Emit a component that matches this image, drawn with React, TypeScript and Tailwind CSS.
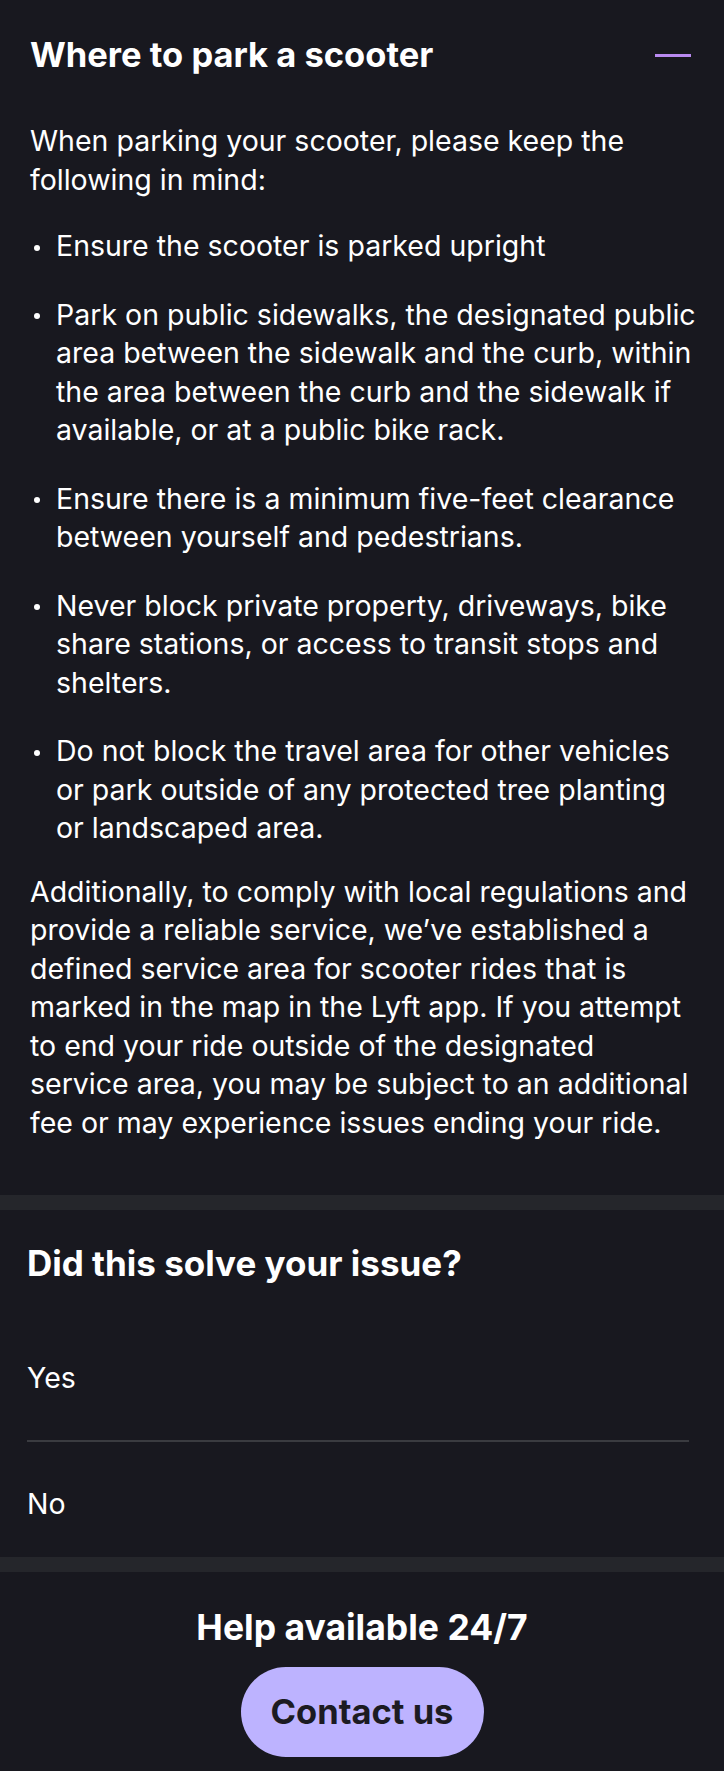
import React from 'react';

// line breaks follow the reference layout
const intro = ['When parking your scooter, please keep the', 'following in mind:'];

const bullets = [
  ['Ensure the scooter is parked upright'],
  [
    'Park on public sidewalks, the designated public',
    'area between the sidewalk and the curb, within',
    'the area between the curb and the sidewalk if',
    'available, or at a public bike rack.',
  ],
  ['Ensure there is a minimum five-feet clearance', 'between yourself and pedestrians.'],
  ['Never block private property, driveways, bike', 'share stations, or access to transit stops and', 'shelters.'],
  ['Do not block the travel area for other vehicles', 'or park outside of any protected tree planting', 'or landscaped area.'],
];

const additional = [
  'Additionally, to comply with local regulations and',
  'provide a reliable service, we’ve established a',
  'defined service area for scooter rides that is',
  'marked in the map in the Lyft app. If you attempt',
  'to end your ride outside of the designated',
  'service area, you may be subject to an additional',
  'fee or may experience issues ending your ride.',
];

const Lines: React.FC<{ lines: string[] }> = ({ lines }) => (
  <>
    {lines.map((l, i) => (
      <span key={i} className="block whitespace-nowrap">
        {l}
      </span>
    ))}
  </>
);

const App: React.FC = () => {
  return (
    <div className="min-h-screen w-full bg-[#18181f] text-white font-['Inter',sans-serif]">
      <section className="px-[30px] pt-[33px] pb-[53px]">
        <div className="flex items-center justify-between">
          <h2 className="text-[34.5px] leading-[44px] font-bold">Where to park a scooter</h2>
          <span className="block w-[36px] h-[3px] bg-[#b98af0] mr-[3px]" />
        </div>

        <div className="mt-[45px] text-[28.5px] leading-[38.5px]">
          <p>
            <Lines lines={intro} />
          </p>
          <ul className="mt-[28px]">
            {bullets.map((b, i) => (
              <li key={i} className={`flex ${i > 0 ? 'mt-[30px]' : ''}`}>
                <span className="w-[26px] h-[38.5px] shrink-0 flex items-center">
                  <span className="block w-[6px] h-[6px] rounded-full bg-white ml-[4px] mt-[3px]" />
                </span>
                <span>
                  <Lines lines={b} />
                </span>
              </li>
            ))}
          </ul>
          <p className="mt-[25px]">
            <Lines lines={additional} />
          </p>
        </div>
      </section>

      <div className="h-[15px] bg-[#25262b]" />

      <section className="pl-[27px] pr-[35px] pt-[33px]">
        <h3 className="text-[35px] leading-[40px] font-bold">Did this solve your issue?</h3>
        <div className="mt-[33px]">
          <button className="block w-full text-left pt-[43px] pb-[43px] text-[28.5px] leading-[38px] border-b-2 border-[#3a3b40]">
            Yes
          </button>
          <button className="block w-full text-left pt-[43px] pb-[34px] text-[28.5px] leading-[38px]">No</button>
        </div>
      </section>

      <div className="h-[15px] bg-[#25262b]" />

      <section className="flex flex-col items-center pt-[36px] pb-[14px]">
        <h3 className="text-[35.5px] leading-[40px] font-bold">Help available 24/7</h3>
        <button className="mt-[19px] w-[243px] h-[90px] rounded-full bg-[#bdb3ff] text-[#1c1b22] text-[34.5px] font-bold">
          Contact us
        </button>
      </section>
    </div>
  );
};

export default App;
